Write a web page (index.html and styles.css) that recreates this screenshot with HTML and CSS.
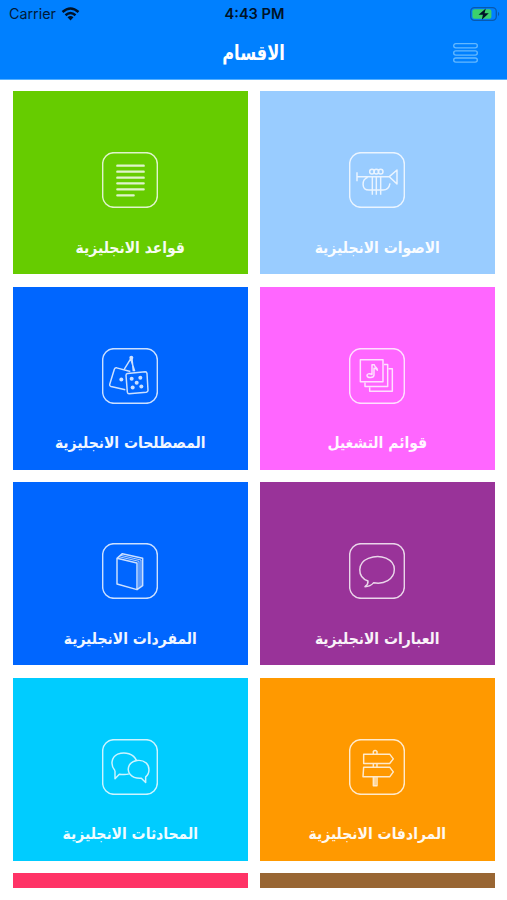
FILE: index.html
```html
<!DOCTYPE html>
<html lang="ar" dir="rtl">
<head>
<meta charset="utf-8">
<title>الاقسام</title>
<link rel="stylesheet" href="styles.css">
</head>
<body>
<header class="header">
  <div class="status" dir="ltr">
    <div class="carrier"><span>Carrier</span>
      <svg class="wifi" viewBox="0 0 18 14"><path d="M1 5Q9-2 17 5M4 8.2Q9 3.8 14 8.2"/><path class="dot" d="M6 10.3Q9 7.8 12 10.3L9 13.5Z"/></svg>
    </div>
    <div class="clock">4:43 PM</div>
    <svg class="battery" viewBox="0 0 30 14"><rect class="shell" x=".7" y=".7" width="25.6" height="12.6" rx="3.8"/><rect class="charge" x="2.4" y="2.3" width="19" height="9.4" rx="2"/><path class="cap" d="M28 4.8Q30.5 7 28 9.2Z"/><path class="bolt" d="M15.8 1.6 8.5 7.8h4.4L11.8 12.8 18.8 6.3h-4.3Z"/></svg>
  </div>
  <div class="nav">
    <svg class="menu" viewBox="0 0 25 20"><rect x=".7" y=".7" width="23.6" height="4.2" rx="2.1"/><rect x=".7" y="7.9" width="23.6" height="4.2" rx="2.1"/><rect x=".7" y="15" width="23.6" height="4.2" rx="2.1"/></svg>
    <h1>الاقسام</h1>
  </div>
</header>
<main class="grid">
  <section class="tile sky">
    <svg class="icon" viewBox="157 36 168 168"><rect x="159" y="38" width="164" height="164" rx="34"/><path d="M181 97V124M181 110H278L301 90V132L278 110M213 112C195 118 193 150 217 150H259C272 150 278 142 280 130M227 108V164M239 108V164M252 108V164"/><circle cx="226" cy="95" r="7"/><circle cx="239" cy="95" r="7"/><circle cx="252" cy="95" r="7"/></svg>
    <h2>الاصوات الانجليزية</h2>
  </section>
  <section class="tile green">
    <svg class="icon" viewBox="157 36 168 168"><rect x="159" y="38" width="164" height="164" rx="34"/><path class="lines" d="M203 77H282M203 95H282M203 113H282M203 130H282M203 148H282M203 166H252"/></svg>
    <h2>قواعد الانجليزية</h2>
  </section>
  <section class="tile pink">
    <svg class="icon" viewBox="157 37.5 168 168"><rect x="159" y="39.5" width="164" height="164" rx="34"/><path d="M191 73H259V139H191ZM262 87H273V153H205V142M276 100H287V167H219V156"/><path d="M226 117V88H233C235 97 243 96 242 104C239 97 235 98 232 98V119C231 128 213 129 211 120C211 115 218 113 226 117Z"/></svg>
    <h2>قوائم التشغيل</h2>
  </section>
  <section class="tile blue">
    <svg class="icon" viewBox="157 37.5 168 168"><rect x="159" y="39.5" width="164" height="164" rx="34"/><path d="M224 101 243 70 255 107M247 70 251 107M227 163 184 153Q179 151 180 147L194 101Q196 96 201 97L242 108M234 114 287 109Q291 109 292 114L295 165Q295 169 290 170L238 175Q234 175 233 170L229 119Q229 115 234 114Z"/><circle class="fill" cx="245" cy="67" r="6"/><g class="fill"><circle cx="215" cy="132" r="6"/><circle cx="246" cy="130" r="6"/><circle cx="272" cy="127" r="6"/><circle cx="261" cy="142" r="6"/><circle cx="249" cy="156" r="6"/><circle cx="275" cy="153" r="6"/></g></svg>
    <h2>المصطلحات الانجليزية</h2>
  </section>
  <section class="tile purple">
    <svg class="icon" viewBox="157 39 168 168"><rect x="159" y="41" width="164" height="164" rx="34"/><path d="M214 153C180 140 182 98 215 85C252 70 293 87 293 118C293 149 261 164 231 158C223 168 214 170 205 170Q215 163 214 153Z"/></svg>
    <h2>العبارات الانجليزية</h2>
  </section>
  <section class="tile blue">
    <svg class="icon" viewBox="157 39 168 168"><rect x="159" y="41" width="164" height="164" rx="34"/><path d="M202 85 262 99V179L202 162ZM202 85 218 71 279 85V167L262 179"/><path class="pages" d="M207 80 268 94V174M213 76 274 90V170"/></svg>
    <h2>المفردات الانجليزية</h2>
  </section>
  <section class="tile orange">
    <svg class="icon" viewBox="157 37.5 168 168"><rect x="159" y="39.5" width="164" height="164" rx="34"/><path d="M201 83H279L290 97 279 111H201ZM201 122H279L290 136 279 151H199ZM230 83V75Q235 69 241 75V83M230 111V122M241 111V122M230 151V178H241V151M235 153V177"/></svg>
    <h2>المرادفات الانجليزية</h2>
  </section>
  <section class="tile cyan">
    <svg class="icon" viewBox="157 37.5 168 168"><rect x="159" y="39.5" width="164" height="164" rx="34"/><path d="M196 133C182 117 184 92 204 83C226 74 253 82 260 102M196 133V157L209 143C219 144 229 145 238 142M288 151C301 141 301 120 289 109C275 97 248 100 239 116C229 136 244 157 275 155L288 168Z"/></svg>
    <h2>المحادثات الانجليزية</h2>
  </section>
  <section class="tile brown"></section>
  <section class="tile red"></section>
</main>
</body>
</html>
```
FILE: styles.css
```css
* { box-sizing: border-box; }
body {
  margin: 0;
  height: 900px;
  overflow: hidden;
  background: #fff;
  font-family: "DejaVu Sans Condensed", "DejaVu Sans", sans-serif;
  font-stretch: condensed;
}
svg { display: block; fill: none; }
.header {
  height: 79.5px;
  background: #0080ff;
  border-bottom: 1px solid #56b0ff;
}
.status {
  display: grid;
  grid-template-columns: 1fr auto 1fr;
  align-items: center;
  height: 27px;
  padding: 0 7px 0 9px;
  color: #001a38;
  font-family: Inter, sans-serif;
  font-stretch: normal;
  font-size: 14.3px;
}
.carrier { display: flex; align-items: center; gap: 5px; }
.wifi { width: 19px; height: 14px; stroke: #001327; stroke-width: 2.5; }
.wifi .dot { fill: #001327; stroke: none; }
.clock { font-weight: 600; font-size: 14.6px; color: #001327; }
.battery { width: 30px; height: 14px; justify-self: end; }
.shell { stroke: #0859ae; stroke-width: 1.3; }
.charge { fill: #3bd06c; }
.cap { fill: #0859ae; }
.bolt { fill: #001327; }
.nav {
  display: grid;
  grid-template-columns: 1fr auto 1fr;
  align-items: center;
  height: 51px;
  padding: 0 29px;
}
.menu { width: 25px; height: 20px; stroke: #64b8ff; stroke-width: 1.3; }
h1, h2 { margin: 0; color: #fff; font-weight: 700; white-space: nowrap; }
h1 { grid-column: 2; font-size: 18px; line-height: 24px; transform: scaleY(1.14); }
.grid {
  display: grid;
  grid-template-columns: 234.5px 234.5px;
  grid-template-rows: repeat(4, 183px) 14.5px;
  gap: 12.5px;
  padding: 11.9px 12.5px;
}
.tile {
  display: flex;
  flex-direction: column;
  align-items: center;
  color: #fff;
}
.icon {
  flex: none;
  width: 56px;
  height: 56px;
  margin-top: 60.7px;
  stroke: currentColor;
  stroke-width: 4.4;
  stroke-linejoin: round;
  opacity: .8;
}
.lines { stroke-width: 7; stroke-linecap: round; }
.pages { stroke-width: 2.6; }
.fill { fill: currentColor; stroke: none; }
h2 { margin-top: 29.8px; font-size: 15.5px; line-height: 20px; opacity: .94; }
.sky { background: #99ccff; }
.green { background: #66cc00; }
.pink { background: #ff66ff; }
.blue { background: #0066ff; }
.purple { background: #993399; }
.orange { background: #ff9900; }
.cyan { background: #00ccff; }
.brown { background: #996633; }
.red { background: #ff3366; }
```
